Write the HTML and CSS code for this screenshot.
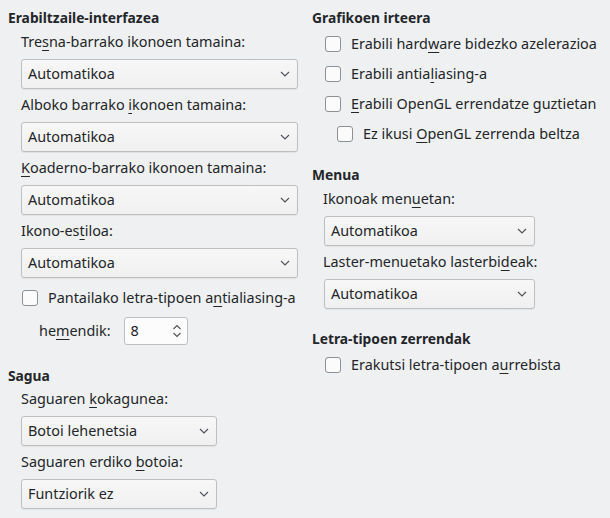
FILE: index.html
```html
<!DOCTYPE html>
<html>
<head>
<meta charset="utf-8">
<link rel="stylesheet" href="styles.css">
</head>
<body>
<div class="page">
  <div class="col col-left">
    <div class="header h-first">Erabiltzaile-interfazea</div>
    <div class="group">
      <div class="label">Tre<u>s</u>na-barrako ikonoen tamaina:</div>
      <div class="combo wide"><span>Automatikoa</span><svg class="chev" width="10" height="6" viewBox="0 0 10 6"><path d="M1 1 L5 5 L9 1" fill="none" stroke="#4d5054" stroke-width="1.1"/></svg></div>
      <div class="label">Alboko barrako <u>i</u>konoen tamaina:</div>
      <div class="combo wide"><span>Automatikoa</span><svg class="chev" width="10" height="6" viewBox="0 0 10 6"><path d="M1 1 L5 5 L9 1" fill="none" stroke="#4d5054" stroke-width="1.1"/></svg></div>
      <div class="label"><u>K</u>oaderno-barrako ikonoen tamaina:</div>
      <div class="combo wide"><span>Automatikoa</span><svg class="chev" width="10" height="6" viewBox="0 0 10 6"><path d="M1 1 L5 5 L9 1" fill="none" stroke="#4d5054" stroke-width="1.1"/></svg></div>
      <div class="label">Ikono-es<u>t</u>iloa:</div>
      <div class="combo wide"><span>Automatikoa</span><svg class="chev" width="10" height="6" viewBox="0 0 10 6"><path d="M1 1 L5 5 L9 1" fill="none" stroke="#4d5054" stroke-width="1.1"/></svg></div>
      <div class="check check-aa"><span class="box"></span><span>Pantailako letra-tipoen a<u>n</u>tialiasing-a</span></div>
      <div class="spinrow">
        <span class="spinlabel">he<u>m</u>endik:</span>
        <div class="spin"><span>8</span><svg class="spinarrows" width="10" height="16" viewBox="0 0 10 16"><path d="M1.5 6 L5 2.5 L8.5 6" fill="none" stroke="#4d5054" stroke-width="1.1"/><path d="M1.5 10 L5 13.5 L8.5 10" fill="none" stroke="#4d5054" stroke-width="1.1"/></svg></div>
      </div>
    </div>
    <div class="header h-sagua">Sagua</div>
    <div class="group">
      <div class="label label-tight">Saguaren <u>k</u>okagunea:</div>
      <div class="combo narrow"><span>Botoi lehenetsia</span><svg class="chev" width="10" height="6" viewBox="0 0 10 6"><path d="M1 1 L5 5 L9 1" fill="none" stroke="#4d5054" stroke-width="1.1"/></svg></div>
      <div class="label">Saguaren erdiko <u>b</u>otoia:</div>
      <div class="combo narrow"><span>Funtziorik ez</span><svg class="chev" width="10" height="6" viewBox="0 0 10 6"><path d="M1 1 L5 5 L9 1" fill="none" stroke="#4d5054" stroke-width="1.1"/></svg></div>
    </div>
  </div>
  <div class="col col-right">
    <div class="header h-first">Grafikoen irteera</div>
    <div class="rgroup">
      <div class="check rcheck"><span class="box"></span><span>Erabili hard<u>w</u>are bidezko azelerazioa</span></div>
      <div class="check rcheck"><span class="box"></span><span>Erabili antia<u>l</u>iasing-a</span></div>
      <div class="check rcheck"><span class="box"></span><span><u>E</u>rabili OpenGL errendatze guztietan</span></div>
      <div class="check rcheck sub"><span class="box"></span><span>Ez ikusi <u>O</u>penGL zerrenda beltza</span></div>
    </div>
    <div class="header h-menua">Menua</div>
    <div class="group rcombo">
      <div class="label">Ikonoak men<u>u</u>etan:</div>
      <div class="combo mid"><span>Automatikoa</span><svg class="chev" width="10" height="6" viewBox="0 0 10 6"><path d="M1 1 L5 5 L9 1" fill="none" stroke="#4d5054" stroke-width="1.1"/></svg></div>
      <div class="label">Laster-menuetako lasterbi<u>d</u>eak:</div>
      <div class="combo mid"><span>Automatikoa</span><svg class="chev" width="10" height="6" viewBox="0 0 10 6"><path d="M1 1 L5 5 L9 1" fill="none" stroke="#4d5054" stroke-width="1.1"/></svg></div>
    </div>
    <div class="header h-letra">Letra-tipoen zerrendak</div>
    <div class="rgroup">
      <div class="check rcheck first"><span class="box"></span><span>Erakutsi letra-tipoen a<u>u</u>rrebista</span></div>
    </div>
  </div>
</div>
</body>
</html>
```
FILE: styles.css
```css
html, body {
  margin: 0;
  padding: 0;
  background: #eff0f1;
}
body {
  font-family: "Noto Sans", "DejaVu Sans", sans-serif;
  font-size: 14.4px;
  line-height: 20px;
  color: #232629;
  width: 610px;
  height: 518px;
  overflow: hidden;
}
u {
  text-decoration: underline;
  text-decoration-thickness: 1px;
  text-underline-offset: 3px;
}
.page {
  display: flex;
  padding-left: 8px;
}
.col-left {
  width: 304px;
  display: flex;
  flex-direction: column;
}
.col-right {
  flex: 1;
  display: flex;
  flex-direction: column;
}
.header {
  font-weight: bold;
  font-size: 13.8px;
  height: 20px;
}
.h-first { margin-top: 8px; }
.h-sagua { margin-top: 21px; }
.h-menua { margin-top: 21px; }
.h-letra { margin-top: 20px; }
.group {
  display: flex;
  flex-direction: column;
  padding-left: 13px;
}
.label {
  height: 20px;
  margin-top: 4px;
  white-space: nowrap;
}
.combo + .label { margin-top: 6px; }
.label-tight { margin-top: 3px; }
.combo {
  box-sizing: border-box;
  height: 30px;
  margin-top: 7px;
  border: 1px solid #bdbfc1;
  border-radius: 3px;
  background: linear-gradient(#f7f7f7, #f0f0f0);
  box-shadow: 0 1px 1px rgba(0, 0, 0, 0.06);
  display: flex;
  align-items: center;
  justify-content: space-between;
  padding: 0 7px 0 6px;
}
.wide { width: 277px; }
.narrow { width: 196px; }
.mid { width: 211px; }
.chev { display: block; }
.check {
  display: flex;
  align-items: center;
  height: 20px;
  white-space: nowrap;
}
.check-aa {
  margin-top: 10px;
  padding-left: 1px;
}
.box {
  box-sizing: border-box;
  width: 16px;
  height: 16px;
  border: 1px solid #8e9194;
  border-radius: 3px;
  background: #fbfbfb;
  margin-right: 10px;
  flex: none;
}
.spinrow {
  display: flex;
  align-items: center;
  margin-top: 9px;
  padding-left: 18px;
}
.spinlabel {
  margin-right: 13px;
}
.spin {
  box-sizing: border-box;
  width: 64px;
  height: 28px;
  border: 1px solid #bdbfc1;
  border-radius: 3px;
  background: #fcfcfc;
  display: flex;
  align-items: center;
  justify-content: space-between;
  padding: 0 5px 0 6px;
}
.spinarrows { display: block; }
.rgroup {
  display: flex;
  flex-direction: column;
  padding-left: 13px;
}
.rcheck {
  margin-top: 10px;
}
.rcheck.first { margin-top: 6px; }
.rgroup .rcheck:first-child:not(.first) { margin-top: 6px; }
.sub { padding-left: 12px; }
.rcombo { padding-left: 11px; }
.rcombo .combo { margin-left: 1px; }
.rcombo .label { margin-top: 4px; }
.rcombo .combo + .label { margin-top: 6px; }
```
